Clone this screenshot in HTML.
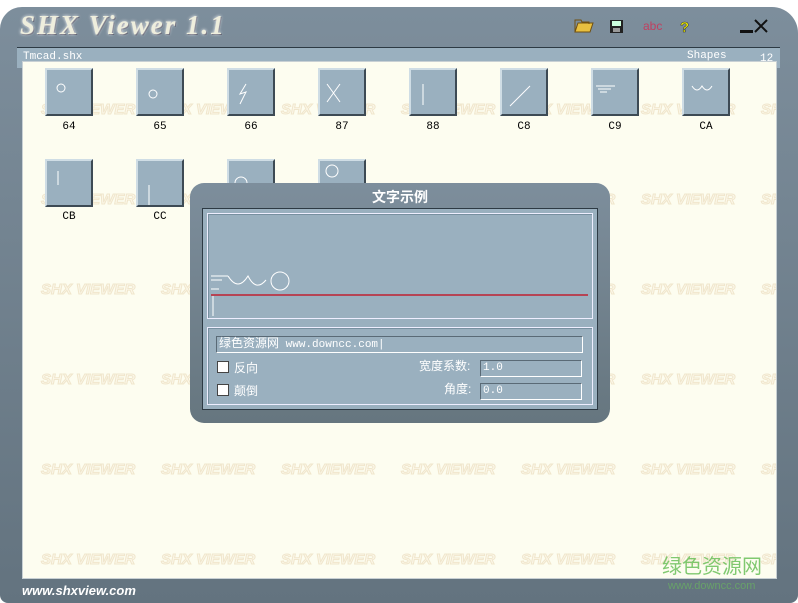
<!DOCTYPE html>
<html><head><meta charset="utf-8"><style>
*{margin:0;padding:0;box-sizing:border-box}
body{width:798px;height:603px;overflow:hidden;background:#fff;position:relative;font-family:"Liberation Sans","Noto Sans CJK SC",sans-serif}
.win{position:absolute;left:0;top:7px;width:798px;height:596px;background:linear-gradient(#7d8e9c,#63737f);border-radius:22px 26px 8px 8px}
.title{position:absolute;left:20px;top:3px;font:italic bold 27px "Liberation Serif",serif;color:#eeeedd;letter-spacing:2px;text-shadow:0 0 3px #fff,1px 1px 0 #556}
.hdr{position:absolute;left:17px;top:40px;width:763px;height:21px;background:#9ab0bf;border-top:1px solid #2d3a44;font:11px "Liberation Mono",monospace;color:#fff}
.content{position:absolute;left:22px;top:61px;width:755px;height:518px;background:#fdfdf0;border:1px solid #c8d0d4;overflow:hidden}
.wm{position:absolute;white-space:nowrap;font:italic bold 15px "Liberation Sans",sans-serif;color:#fcf8ea;-webkit-text-stroke:1px #f0e6cc}
.btn{position:absolute;width:48px;height:48px;background:#9ab0bf;border-top:2px solid #cfdde5;border-left:2px solid #cfdde5;border-right:2px solid #3d4a54;border-bottom:2px solid #3d4a54}
.lbl{position:absolute;width:48px;text-align:center;font:11px "Liberation Mono",monospace;color:#000}
.dlg{position:absolute;left:190px;top:183px;width:420px;height:240px;background:linear-gradient(#7d8e9c,#66767f);border-radius:14px}
.panel{position:absolute;left:12px;top:25px;width:396px;height:202px;background:#9ab0bf;border:1px solid #2d3a44}
.box{position:absolute;border:1px solid #eef;box-shadow:inset 1px 1px 0 #7890a0}
.inp{position:absolute;height:17px;border:1px solid #fff;border-top-color:#5a6a76;border-left-color:#5a6a76;background:#9ab0bf;font:11px "Liberation Mono",monospace;color:#fff;padding-left:2px;line-height:15px}
.cb{position:absolute;width:12px;height:12px;background:#fff;border:1px solid #444}
.t{position:absolute;font-size:12px;color:#fff}
</style></head><body>
<div class="win">
<div class="title">SHX Viewer 1.1</div>
<svg style="position:absolute;left:573px;top:7px" width="200" height="26">
<path d="M2 18 L5 9 L20 9 L17 18Z" fill="#e8c040" stroke="#705010"/><path d="M2 18 L2 6 L8 6 L9 8 L16 8 L16 10" fill="none" stroke="#705010"/>
<rect x="37" y="6" width="13" height="13" fill="#222"/><rect x="39" y="7" width="9" height="5" fill="#cfd"/><rect x="40" y="14" width="7" height="4" fill="#999"/>
<text x="70" y="16" font-family="Liberation Sans" font-size="12" fill="#c04060">abc</text>
<text x="107" y="18" font-family="Liberation Sans" font-weight="bold" font-size="15" fill="#ee0" stroke="#333" stroke-width=".5">?</text>
<rect x="167" y="16" width="13" height="3" fill="#111"/><path d="M182 6 L194 18 M194 6 L182 18" stroke="#111" stroke-width="2"/>
</svg>
<div class="hdr"><span style="position:absolute;left:6px;top:3px">Tmcad.shx</span><span style="position:absolute;left:670px;top:2px">Shapes</span><span style="position:absolute;left:743px;top:5px">12</span></div>
</div>
<div class="content"></div>
<div style="position:absolute;left:22px;top:583px;font:italic bold 13px 'Liberation Sans',sans-serif;color:#fff">www.shxview.com</div>
<div style="position:absolute;left:662px;top:550px;font:20px 'Noto Sans CJK SC',sans-serif;color:#6bc05a;opacity:.85">绿色资源网</div>
<div style="position:absolute;left:668px;top:580px;font:11px 'Liberation Sans',sans-serif;color:#6bc05a;opacity:.6">www.downcc.com</div>
<script>
var c=document.querySelector('.content'),h='';
for(var y=0;y<6;y++)for(var x=0;x<7;x++)h+='<div class="wm" style="left:'+(18+120*x)+'px;top:'+(39+90*y)+'px">SHX VIEWER</div>';
var names=['64','65','66','87','88','C8','C9','CA'];
var ic=['<circle cx="14" cy="18" r="4"/>','<circle cx="15" cy="24" r="4"/>','<path d="M17 14 L11 24 L17 22 L11 34"/>','<path d="M7 14 L20 32 M20 14 L7 32"/>','<path d="M12 14 L12 35"/>','<path d="M8 36 L28 16"/>','<path d="M3 16 L22 16 M5 19 L18 19 M7 22 L14 22"/>','<path d="M8 16 Q13 24 18 16 Q23 24 28 16"/>'];
for(var i=0;i<8;i++){h+='<div class="btn" style="left:'+(22+91*i)+'px;top:6px"><svg width="44" height="44" fill="none" stroke="#fff">'+ic[i]+'</svg></div><div class="lbl" style="left:'+(22+91*i)+'px;top:59px">'+names[i]+'</div>';}
var ic2=['<path d="M11 10 L11 24"/>','<path d="M11 24 L11 44"/>','<circle cx="12" cy="22" r="6"/>','<circle cx="12" cy="10" r="6"/>'];
var n2=['CB','CC','',''];
for(var i=0;i<4;i++){h+='<div class="btn" style="left:'+(22+91*i)+'px;top:97px"><svg width="44" height="44" fill="none" stroke="#fff">'+ic2[i]+'</svg></div><div class="lbl" style="left:'+(22+91*i)+'px;top:149px">'+n2[i]+'</div>';}
c.innerHTML=h;
</script>
<div class="dlg">
<div style="position:absolute;left:0;width:420px;top:4px;text-align:center;font:bold 14px 'Noto Sans CJK SC',sans-serif;color:#fff">文字示例</div>
<div class="panel">
<div class="box" style="left:4px;top:4px;width:386px;height:106px">
<svg width="386" height="106" style="position:absolute;left:0;top:0" fill="none" stroke="#fff">
<path d="M3 62 L20 62 M3 66 L14 66 M3 75 L11 75"/>
<path d="M20 62 Q30 78 40 62 Q48 78 58 66"/><circle cx="72" cy="67" r="9"/>
<path d="M5 82 L5 102"/>
<path d="M3 81 L380 81" stroke="#c02030" stroke-width="1.5"/>
</svg></div>
<div class="box" style="left:4px;top:118px;width:386px;height:78px"></div>
<div class="inp" style="left:13px;top:127px;width:367px;font-family:'Liberation Mono','Noto Sans CJK SC',monospace"><span style="font-size:12px">绿色资源网</span> www.downcc.com|</div>
<div class="cb" style="left:14px;top:152px"></div><div class="t" style="left:31px;top:150px">反向</div>
<div class="cb" style="left:14px;top:175px"></div><div class="t" style="left:31px;top:173px">颠倒</div>
<div class="t" style="left:216px;top:148px">宽度系数:</div>
<div class="inp" style="left:277px;top:151px;width:102px">1.0</div>
<div class="t" style="left:241px;top:171px">角度:</div>
<div class="inp" style="left:277px;top:174px;width:102px">0.0</div>
</div>
</div>
</body></html>
